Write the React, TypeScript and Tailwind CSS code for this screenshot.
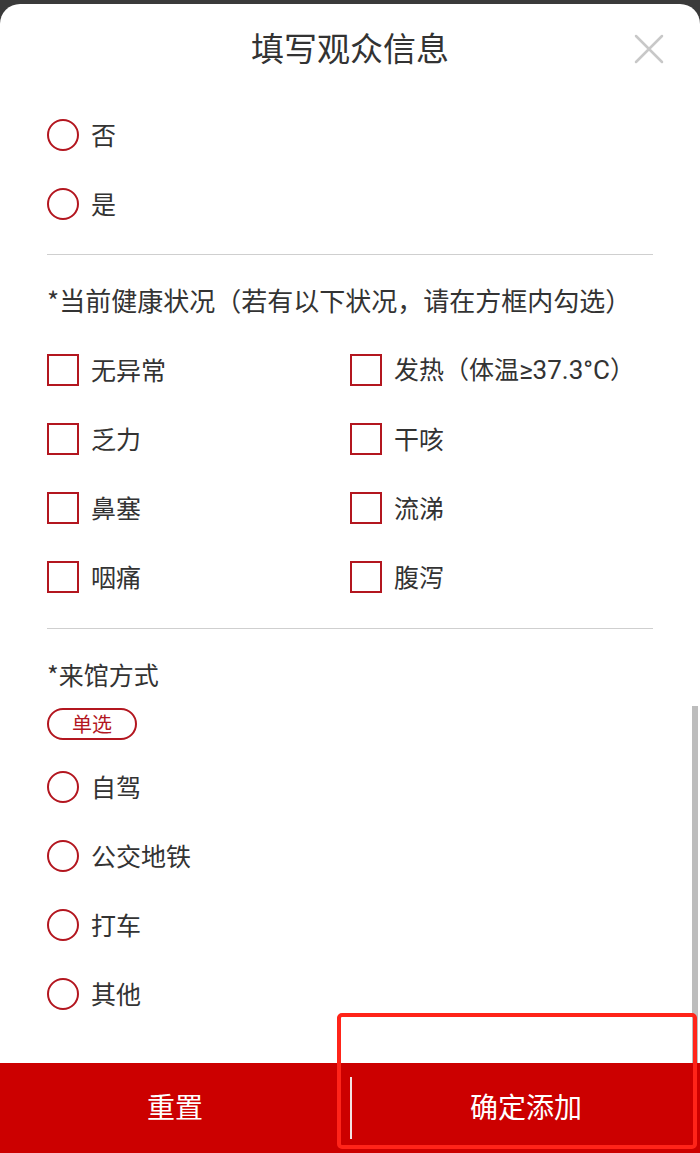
import React from "react";

const font = { fontFamily: '"Noto Sans CJK SC", "Noto Sans", sans-serif' };

const Radio: React.FC<{ label: React.ReactNode }> = ({ label }) => (
  <div className="flex h-[69px] items-center gap-[12px]">
    <span className="h-[32px] w-[32px] shrink-0 rounded-full border-2 border-[#b3161f]" />
    <span className="text-[25px] leading-none text-[#333]">{label}</span>
  </div>
);

const Check: React.FC<{ label: React.ReactNode }> = ({ label }) => (
  <div className="flex h-[69px] items-center gap-[12px]">
    <span className="h-[32px] w-[32px] shrink-0 border-2 border-[#b3161f]" />
    <span className="text-[25px] leading-none text-[#333]">{label}</span>
  </div>
);

const health: { key: string; label: React.ReactNode }[] = [
  { key: "a", label: "无异常" },
  {
    key: "b",
    label: (
      <>
        发热（体温
        <span className="font-['Roboto',sans-serif] text-[26px]">≥37.3°C</span>）
      </>
    ),
  },
  { key: "c", label: "乏力" },
  { key: "d", label: "干咳" },
  { key: "e", label: "鼻塞" },
  { key: "f", label: "流涕" },
  { key: "g", label: "咽痛" },
  { key: "h", label: "腹泻" },
];

export default function App() {
  return (
    <div
      className="relative h-[1153px] w-[700px] overflow-hidden bg-[#3a3a3a] pt-[4px]"
      style={font}
    >
      <div className="flex h-full flex-col rounded-t-[20px] bg-white">
        {/* header */}
        <div className="relative flex h-[88px] shrink-0 items-center justify-center">
          <h1 className="text-[33px] font-normal text-[#333]">填写观众信息</h1>
          <svg
            className="absolute right-[36px] top-[30px]"
            width="30"
            height="30"
            viewBox="0 0 30 30"
          >
            <path
              d="M2 2L28 28M28 2L2 28"
              stroke="#c8c8c8"
              strokeWidth="2.5"
              strokeLinecap="round"
            />
          </svg>
        </div>

        {/* form */}
        <div className="flex-1 overflow-hidden px-[47px] pt-[8px]">
          <Radio label="否" />
          <Radio label="是" />
          <div className="mt-[16px] border-t border-[#cfcfcf]" />

          <div className="h-[80px] pt-[31px] text-[26px] leading-[28px] text-[#333]">
            *当前健康状况（若有以下状况，请在方框内勾选）
          </div>
          <div className="grid grid-cols-2">
            {health.map((h) => (
              <Check key={h.key} label={h.label} />
            ))}
          </div>
          <div className="mt-[17px] border-t border-[#cfcfcf]" />

          <div className="pt-[31px] text-[25px] leading-[28px] text-[#333]">
            *来馆方式
          </div>
          <div className="mt-[20px] flex h-[32px] w-[90px] items-center justify-center rounded-full border-2 border-[#b3161f] text-[20px] leading-none text-[#b3161f]">
            单选
          </div>
          <div className="mt-[12px]">
            <Radio label="自驾" />
            <Radio label="公交地铁" />
            <Radio label="打车" />
            <Radio label="其他" />
          </div>
        </div>

        {/* footer */}
        <div className="flex h-[90px] shrink-0 items-center bg-[#cc0000] text-[28px] text-white">
          <button className="flex h-full w-[350px] items-center justify-center pb-[4px]">
            重置
          </button>
          <span className="h-[62px] w-[2px] bg-[#f3e3e3]" />
          <button className="flex h-full flex-1 items-center justify-center pb-[4px]">
            确定添加
          </button>
        </div>
      </div>

      {/* scrollbar */}
      <div className="absolute left-[692px] top-[706px] h-[357px] w-[6px] bg-[#bdbdbd]" />

      {/* annotation box */}
      <div className="pointer-events-none absolute left-[337px] top-[1013px] h-[136px] w-[360px] rounded-[5px] border-[4px] border-[#ff2419]" />
    </div>
  );
}
